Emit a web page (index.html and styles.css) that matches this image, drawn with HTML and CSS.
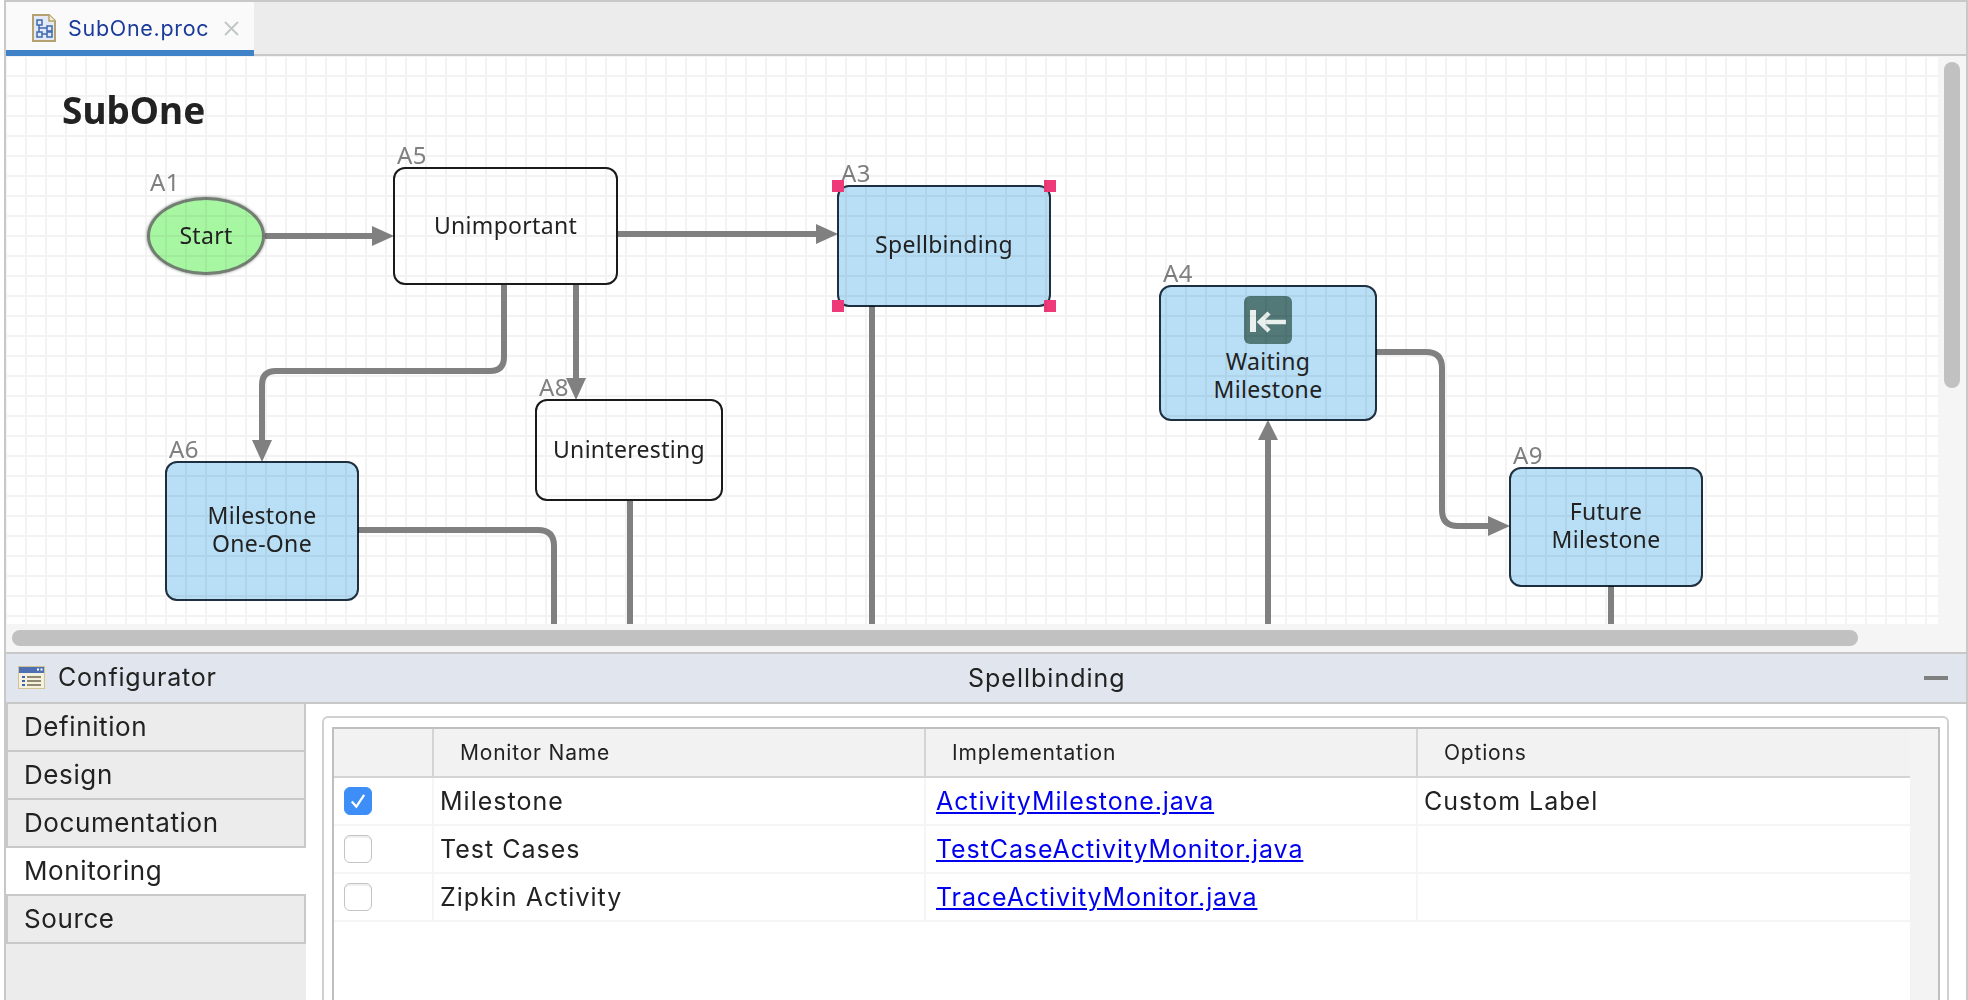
FILE: index.html
```html
<!DOCTYPE html>
<html lang="en">
<head>
    <meta charset="UTF-8">
    <title>SubOne.proc</title>
    <link rel="stylesheet" href="styles.css">
</head>
<body>
<div class="app">
    <div class="tabbar">
        <div class="tab">
            <svg class="tab-icon" width="24" height="28" viewBox="0 0 24 28">
                <path d="M1 1H17L23 7V27H1Z" fill="#e3eaf5" stroke="#b5a271" stroke-width="2"/>
                <path d="M17 1V7H23" fill="#f4eeda" stroke="#b5a271" stroke-width="1.5"/>
                <path d="M7 8V20H18M7 14H18V20" fill="none" stroke="#3d68ad" stroke-width="1.5"/>
                <rect x="5" y="6" width="5" height="5" fill="#e3eaf5" stroke="#3d68ad" stroke-width="1.5"/>
                <rect x="5" y="18" width="5" height="5" fill="#e3eaf5" stroke="#3d68ad" stroke-width="1.5"/>
                <rect x="15" y="12" width="5" height="5" fill="#e3eaf5" stroke="#3d68ad" stroke-width="1.5"/>
                <rect x="15" y="18" width="5" height="5" fill="#e3eaf5" stroke="#3d68ad" stroke-width="1.5"/>
            </svg>
            <span class="tab-name">SubOne.proc</span>
            <svg class="tab-close" width="15" height="15" viewBox="0 0 15 15">
                <path d="M1 1L14 14M14 1L1 14" stroke="#c0c6c6" stroke-width="1.8"/>
            </svg>
        </div>
    </div>

    <div class="canvas-area">
        <div class="canvas">
            <svg class="links" width="1932" height="568" viewBox="6 56 1932 568">
                <g fill="none" stroke="#808080" stroke-width="6">
                    <path d="M265 236H374"/>
                    <path d="M617 234H818"/>
                    <path d="M504 284V357Q504 371 490 371H276Q262 371 262 385V442"/>
                    <path d="M576 284V380"/>
                    <path d="M358 530H538Q554 530 554 546V624"/>
                    <path d="M630 500V624"/>
                    <path d="M872 306V624"/>
                    <path d="M1268 438V624"/>
                    <path d="M1376 352H1426Q1442 352 1442 368V510Q1442 526 1458 526H1490"/>
                    <path d="M1611 586V624"/>
                </g>
                <g fill="#808080">
                    <polygon points="394,236 372,226 372,246"/>
                    <polygon points="838,234 816,224 816,244"/>
                    <polygon points="262,462 252,440 272,440"/>
                    <polygon points="576,400 566,378 586,378"/>
                    <polygon points="1268,420 1258,440 1278,440"/>
                    <polygon points="1510,526 1488,516 1488,536"/>
                </g>
            </svg>

            <div class="diagram-title">SubOne</div>

            <div class="node start node-a1"><span class="node-id">A1</span>Start</div>
            <div class="node node-a5"><span class="node-id">A5</span>Unimportant</div>
            <div class="node node-a8"><span class="node-id">A8</span>Uninteresting</div>
            <div class="node milestone node-a3">
                <span class="node-id">A3</span>Spellbinding
                <i class="handle handle-tl"></i><i class="handle handle-tr"></i>
                <i class="handle handle-bl"></i><i class="handle handle-br"></i>
            </div>
            <div class="node milestone node-a4">
                <span class="node-id">A4</span>
                <svg class="node-icon" width="48" height="48" viewBox="0 0 48 48">
                    <rect width="48" height="48" rx="6" fill="#527877"/>
                    <rect x="6" y="14" width="6" height="22" fill="#e9f0ee"/>
                    <path d="M25 17L16 26L25 35M17 26H42" fill="none" stroke="#e9f0ee" stroke-width="4.5"/>
                </svg>
                <span>Waiting<br>Milestone</span>
            </div>
            <div class="node milestone node-a6"><span class="node-id">A6</span>Milestone<br>One-One</div>
            <div class="node milestone node-a9"><span class="node-id">A9</span>Future<br>Milestone</div>
        </div>
        <div class="vscroll"><div class="vscroll-thumb"></div></div>
        <div class="hscroll"><div class="hscroll-thumb"></div></div>
    </div>

    <div class="config-head">
        <div class="config-left">
            <svg width="27" height="23" viewBox="0 0 27 23">
                <rect x="0.5" y="0.5" width="26" height="22" fill="#f5f1df" stroke="#cfc391"/>
                <rect x="1" y="1" width="25" height="6" fill="#4f6fb5"/>
                <rect x="19" y="2.5" width="2" height="2" fill="#fff"/>
                <rect x="22.5" y="2.5" width="2" height="2" fill="#fff"/>
                <g fill="#3f63b0">
                    <rect x="4" y="10" width="3" height="2"/>
                    <rect x="4" y="14" width="3" height="2"/>
                    <rect x="4" y="18" width="3" height="2"/>
                </g>
                <g fill="#8f8a70">
                    <rect x="9" y="10" width="14" height="2"/>
                    <rect x="9" y="14" width="14" height="2"/>
                    <rect x="9" y="18" width="14" height="2"/>
                </g>
            </svg>
            <span>Configurator</span>
        </div>
        <div class="config-title">Spellbinding</div>
        <div class="config-min"></div>
    </div>

    <div class="config-body">
        <ul class="sections">
            <li>Definition</li>
            <li>Design</li>
            <li>Documentation</li>
            <li class="active">Monitoring</li>
            <li>Source</li>
        </ul>
        <div class="panel">
            <div class="group">
                <div class="table-box">
                    <table class="monitors">
                        <thead>
                            <tr><th></th><th>Monitor Name</th><th>Implementation</th><th>Options</th></tr>
                        </thead>
                        <tbody>
                            <tr>
                                <td><span class="check checked">
                                    <svg width="18" height="18" viewBox="0 0 16 16"><path d="M2.5 8.5L6.5 13L13.5 2.5" fill="none" stroke="#fff" stroke-width="2"/></svg>
                                </span></td>
                                <td>Milestone</td>
                                <td><a href="#">ActivityMilestone.java</a></td>
                                <td>Custom Label</td>
                            </tr>
                            <tr>
                                <td><span class="check"></span></td>
                                <td>Test Cases</td>
                                <td><a href="#">TestCaseActivityMonitor.java</a></td>
                                <td></td>
                            </tr>
                            <tr>
                                <td><span class="check"></span></td>
                                <td>Zipkin Activity</td>
                                <td><a href="#">TraceActivityMonitor.java</a></td>
                                <td></td>
                            </tr>
                        </tbody>
                    </table>
                    <div class="table-scroll"></div>
                </div>
            </div>
        </div>
    </div>
</div>
</body>
</html>
```

FILE: styles.css
```css
html, body {
    margin: 0;
    height: 100%;
    background-color: #fff;
    overflow: hidden;
}

body {
    padding-left: 4px;
    box-sizing: border-box;
    font-family: Inter, "Liberation Sans", sans-serif;
    color: #222;
}

.app {
    box-sizing: border-box;
    height: 1000px;
    display: flex;
    flex-direction: column;
    border-top: 2px solid #c8c8c8;
    border-left: 2px solid #c8c8c8;
    border-right: 2px solid #c8c8c8;
}

/* tab strip */
.tabbar {
    box-sizing: border-box;
    height: 54px;
    flex: none;
    background-color: #ececec;
    border-bottom: 2px solid #c8c8c8;
}

.tab {
    box-sizing: border-box;
    width: 248px;
    height: 54px;
    display: flex;
    align-items: center;
    padding: 4px 0 0 26px;
    background-color: #fafafa;
    border-bottom: 6px solid #3f82c8;
}

.tab-name {
    margin-left: 12px;
    font-size: 21.5px;
    letter-spacing: 0.7px;
    color: #1b3b9c;
}

.tab-close {
    margin-left: 15px;
}

/* process canvas */
.canvas-area {
    flex: none;
    height: 596px;
    display: grid;
    grid-template-columns: 1932px 28px;
    grid-template-rows: 568px 28px;
    background-color: #f5f5f5;
    border-bottom: 2px solid #c8c8c8;
}

.canvas {
    position: relative;
    overflow: hidden;
    background-color: #fff;
    background-image:
        linear-gradient(#f3f3f3 2px, transparent 2px),
        linear-gradient(90deg, #f3f3f3 2px, transparent 2px);
    background-size: 20px 20px;
    background-position: -1px -1px;
}

.links {
    position: absolute;
    left: 0;
    top: 0;
}

.diagram-title {
    position: absolute;
    left: 56px;
    top: 29px;
    font-family: "Noto Sans", sans-serif;
    font-weight: bold;
    font-size: 37px;
    line-height: 50px;
}

.node {
    position: absolute;
    box-sizing: border-box;
    display: flex;
    flex-direction: column;
    align-items: center;
    justify-content: center;
    padding-bottom: 3px;
    text-align: center;
    border: 2px solid #1a1a1a;
    border-radius: 12px;
    font-family: "Noto Sans", sans-serif;
    font-size: 23px;
    letter-spacing: 0.3px;
    line-height: 28px;
    color: #222;
}

.node-id {
    position: absolute;
    left: 2px;
    top: -27px;
    font-size: 24px;
    line-height: 26px;
    color: #808080;
}

.milestone {
    display: block;
    background-color: #b8dff6;
    border-color: #1e3040;
    mix-blend-mode: multiply;
}

.start {
    border: 3px solid #727f72;
    border-radius: 50%;
    background-color: #a7f7a2;
    box-shadow: 0 0 3px #808780;
    mix-blend-mode: multiply;
}

.start .node-id {
    left: 0;
    top: -31px;
}

.node-a1 { left: 141px; top: 141px; width: 118px; height: 78px; }
.node-a5 { left: 387px; top: 111px; width: 225px; height: 118px; }
.node-a8 { left: 529px; top: 343px; width: 188px; height: 102px; }
.node-a3 { left: 831px; top: 129px; width: 214px; height: 122px; padding-top: 43px; }
.node-a4 { left: 1153px; top: 229px; width: 218px; height: 136px; padding-top: 9px; }
.node-a6 { left: 159px; top: 405px; width: 194px; height: 140px; padding-top: 38px; }
.node-a9 { left: 1503px; top: 411px; width: 194px; height: 120px; padding-top: 28px; }

.node-icon {
    display: block;
    margin: 0 auto 3px;
}

.handle {
    position: absolute;
    width: 12px;
    height: 12px;
    background-color: #ee3a78;
}

.handle-tl { left: -7px; top: -7px; }
.handle-tr { right: -7px; top: -7px; }
.handle-bl { left: -7px; bottom: -7px; }
.handle-br { right: -7px; bottom: -7px; }

.vscroll {
    padding: 6px 6px 0;
}

.vscroll-thumb {
    width: 16px;
    height: 326px;
    border-radius: 8px;
    background-color: #c1c1c1;
}

.hscroll {
    padding: 6px 0 0 6px;
}

.hscroll-thumb {
    width: 1846px;
    height: 16px;
    border-radius: 8px;
    background-color: #c1c1c1;
}

/* configurator header */
.config-head {
    box-sizing: border-box;
    flex: none;
    height: 50px;
    display: flex;
    align-items: center;
    background-color: #e1e5ed;
    border-bottom: 2px solid #c8c8c8;
}

.config-left {
    width: 962px;
    display: flex;
    align-items: center;
    padding-left: 12px;
    margin-bottom: 2px;
    box-sizing: border-box;
    font-size: 25px;
    letter-spacing: 0.8px;
}

.config-left span {
    margin-left: 13px;
}

.config-title {
    font-size: 25px;
    letter-spacing: 1px;
}

.config-min {
    width: 24px;
    height: 4px;
    margin: 0 18px 0 auto;
    background-color: #808080;
}

/* configurator body */
.config-body {
    flex: 1;
    min-height: 0;
    display: flex;
}

.sections {
    width: 300px;
    flex: none;
    margin: 0;
    padding: 0;
    list-style: none;
    background-color: #ececec;
    font-size: 26px;
    letter-spacing: 0.6px;
}

.sections li {
    box-sizing: border-box;
    height: 48px;
    line-height: 46px;
    padding-left: 16px;
    border-left: 2px solid #c8c8c8;
    border-right: 2px solid #c8c8c8;
    border-bottom: 2px solid #c8c8c8;
}

.sections li.active {
    background-color: #fff;
    border-left: none;
    border-right: none;
    padding-left: 18px;
}

.panel {
    flex: 1;
    min-width: 0;
    padding: 12px 17px 0 16px;
    background-color: #fff;
}

.group {
    box-sizing: border-box;
    height: 100%;
    padding: 9px 7px 0 8px;
    border: 2px solid #d0d0d0;
    border-bottom: none;
    border-radius: 6px 6px 0 0;
}

.table-box {
    box-sizing: border-box;
    height: 100%;
    display: flex;
    border: 2px solid #bfbfbf;
    border-bottom: none;
}

.table-scroll {
    flex: 1;
    background-color: #f3f3f3;
}

.monitors {
    width: 1576px;
    flex: none;
    align-self: flex-start;
    table-layout: fixed;
    border-collapse: separate;
    border-spacing: 0;
}

.monitors th:first-child,
.monitors td:first-child {
    width: 100px;
}

.monitors th:nth-child(2),
.monitors td:nth-child(2),
.monitors th:nth-child(3),
.monitors td:nth-child(3) {
    width: 492px;
}

.monitors th {
    box-sizing: border-box;
    height: 49px;
    padding: 0 0 0 26px;
    text-align: left;
    font-weight: normal;
    font-size: 21px;
    letter-spacing: 0.8px;
    background-color: #f2f2f2;
    border-bottom: 2px solid #d4d4d4;
    box-shadow: inset -2px 0 0 #d4d4d4;
}

.monitors th:last-child {
    box-shadow: none;
}

.monitors td {
    box-sizing: border-box;
    height: 48px;
    padding: 0 0 0 6px;
    font-size: 25px;
    letter-spacing: 1px;
    border-bottom: 2px solid #f5f5f5;
    border-right: 2px solid #f5f5f5;
}

.monitors td:last-child {
    border-right: none;
}

.monitors td:first-child {
    padding-left: 10px;
}

.monitors td:nth-child(3) {
    padding-left: 10px;
}

.monitors a {
    color: #0000ee;
    letter-spacing: 0.9px;
}

.check {
    box-sizing: border-box;
    display: flex;
    align-items: center;
    justify-content: center;
    width: 28px;
    height: 28px;
    border: 1.5px solid #c4c4c4;
    border-radius: 6px;
    background-color: #fff;
    box-shadow: inset 0 2px 1px #efefef;
}

.check.checked {
    border-color: #3d8ff7;
    background-color: #3d8ff7;
    box-shadow: none;
}
```
